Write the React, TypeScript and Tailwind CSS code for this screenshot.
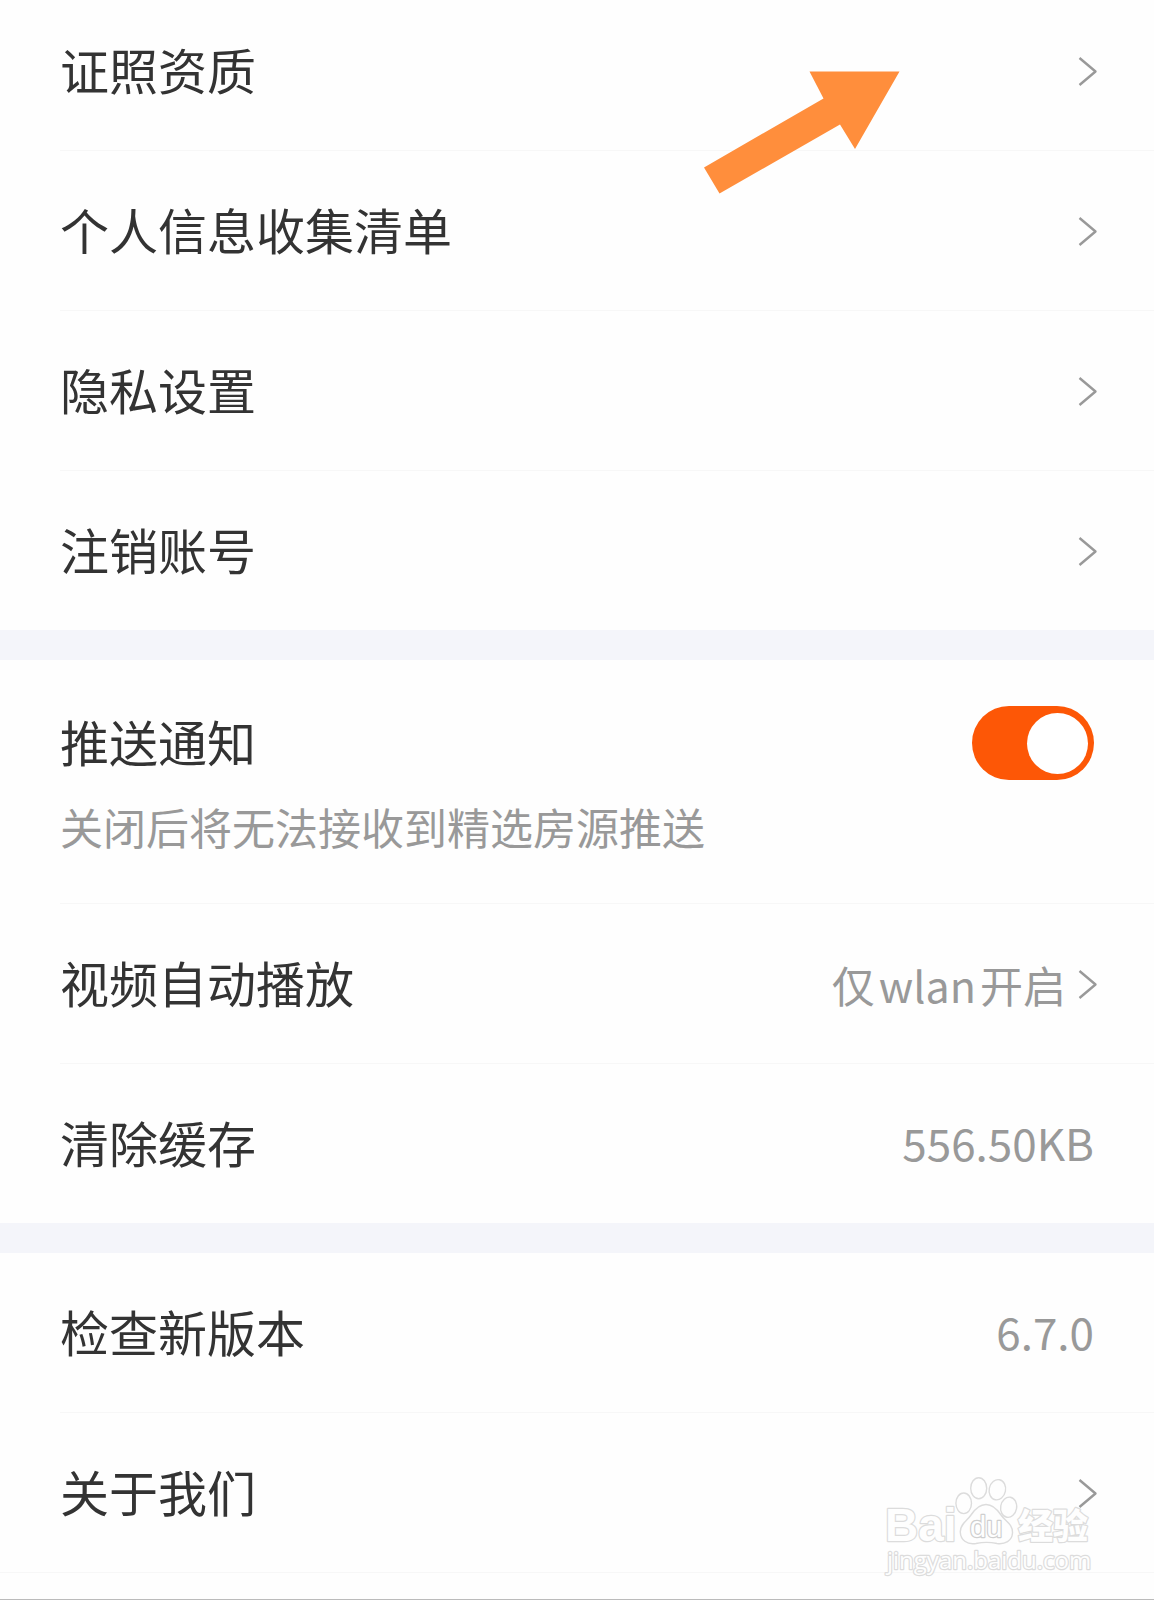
import { useState, type ReactNode } from "react";

function Chevron() {
  return (
    <svg className="h-8 w-5 shrink-0" viewBox="0 0 20 32" fill="none" stroke="#999" strokeWidth="2.4">
      <path d="M1.5 3 L17.5 16.5 L1.5 30" strokeLinejoin="round" />
    </svg>
  );
}

function LinkRow({ title, children }: { title: string; children?: ReactNode }) {
  return (
    <li className="border-b border-[#f7f7f7] last:border-b-0">
      <a href="#" className="flex h-[159px] items-center justify-between pr-14">
        <span className="pb-[3px] text-[49px] leading-[60px]">{title}</span>
        <span className="flex items-center gap-3 text-[43px] leading-[60px] text-[#999]">
          {children}
          <Chevron />
        </span>
      </a>
    </li>
  );
}

function ValueRow({ title, value }: { title: string; value: string }) {
  return (
    <li className="border-b border-[#f7f7f7] last:border-b-0">
      <button type="button" className="flex h-[159px] w-full items-center justify-between pr-[60px] text-left">
        <span className="pb-[3px] text-[49px] leading-[60px]">{title}</span>
        <span className="pb-[3px] text-[44px] leading-[60px] text-[#999]">{value}</span>
      </button>
    </li>
  );
}

function PushRow() {
  const [enabled, setEnabled] = useState(true);

  return (
    <li className="flex h-[244px] items-start justify-between border-b border-[#f7f7f7] pt-[46px] pr-[60px]">
      <div className="pt-[5px]">
        <label htmlFor="push" className="block text-[49px] leading-[60px]">
          推送通知
        </label>
        <p id="push-hint" className="mt-[25px] text-[43px] leading-[60px] text-[#999]">
          关闭后将无法接收到精选房源推送
        </p>
      </div>
      <input
        id="push"
        type="checkbox"
        role="switch"
        aria-describedby="push-hint"
        checked={enabled}
        onChange={(e) => setEnabled(e.target.checked)}
        className="flex h-[74px] w-[122px] shrink-0 cursor-pointer appearance-none items-center rounded-full bg-gray-300 px-[6px] before:size-[61px] before:rounded-full before:bg-white checked:justify-end checked:bg-[#fd5706]"
      />
    </li>
  );
}

function Arrow() {
  return (
    <svg className="absolute top-20 left-[61%] h-[124px] w-[196px]" viewBox="0 0 196 124" fill="#ff8e3c">
      <path d="M0 96.5 L119.5 27.5 L105.5 0.5 L195.5 0.5 L151 78 L136 53.5 L15.5 122.5 Z" />
    </svg>
  );
}

function Watermark() {
  return (
    <svg
      className="absolute right-14 bottom-[18px] h-[110px] w-[220px]"
      viewBox="0 0 220 110"
      fill="#fefefe"
      stroke="#dcdcdc"
      strokeWidth="1.4"
    >
      {/* paw */}
      <ellipse cx="85.7" cy="32.3" rx="7.8" ry="10.3" />
      <ellipse cx="100.7" cy="17.2" rx="8" ry="10.5" />
      <ellipse cx="119.3" cy="18.7" rx="8.2" ry="10.2" transform="rotate(12 119 19)" />
      <ellipse cx="130.7" cy="36.3" rx="8" ry="10.2" transform="rotate(10 131 36)" />
      <path d="M108 33.5 C115 33.5 119 38 123 44 C127 50 135 53 134.5 62 C134 70 127 73.5 119 72.5 C112 71 105 71 98 72.5 C89 74 82.5 69 82.3 61 C82 53 89 50 93 44 C97 38 101 33.5 108 33.5 Z" />
      <g strokeWidth="2.4" strokeLinejoin="round" style={{ paintOrder: "stroke" }}>
        <text x="7" y="70" fontSize="46" fontWeight="700" fontFamily="'Liberation Sans', sans-serif">
          Bai
        </text>
        <text x="92" y="66" fontSize="29" stroke="#cfcfcf" fontFamily="'Liberation Sans', sans-serif">
          du
        </text>
        <text x="140" y="68" fontSize="35" fontWeight="900" fontFamily="'Noto Sans CJK SC', sans-serif">
          经验
        </text>
        <text x="9" y="98" fontSize="24" fontFamily="'Open Sans', sans-serif">
          jingyan.baidu.com
        </text>
      </g>
    </svg>
  );
}

export default function App() {
  return (
    <main className="relative -mt-[9px] overflow-hidden border-b border-[#bbb] bg-[#fefefe] pb-[26px] font-['Noto_Sans_CJK_SC',sans-serif] text-[#333]">
      <ul className="pl-[60px]">
        <LinkRow title="证照资质" />
        <LinkRow title="个人信息收集清单" />
        <LinkRow title="隐私设置" />
        <LinkRow title="注销账号" />
      </ul>

      <div className="h-[30px] bg-[#f4f5fa]" />

      <ul className="pl-[60px]">
        <PushRow />
        <LinkRow title="视频自动播放">
          <span>
            仅<span className="mx-1">wlan</span>开启
          </span>
        </LinkRow>
        <ValueRow title="清除缓存" value="556.50KB" />
      </ul>

      <div className="h-[30px] bg-[#f4f5fa]" />

      <ul className="border-b border-[#f7f7f7] pl-[60px]">
        <ValueRow title="检查新版本" value="6.7.0" />
        <LinkRow title="关于我们" />
      </ul>

      <Arrow />
      <Watermark />
    </main>
  );
}
